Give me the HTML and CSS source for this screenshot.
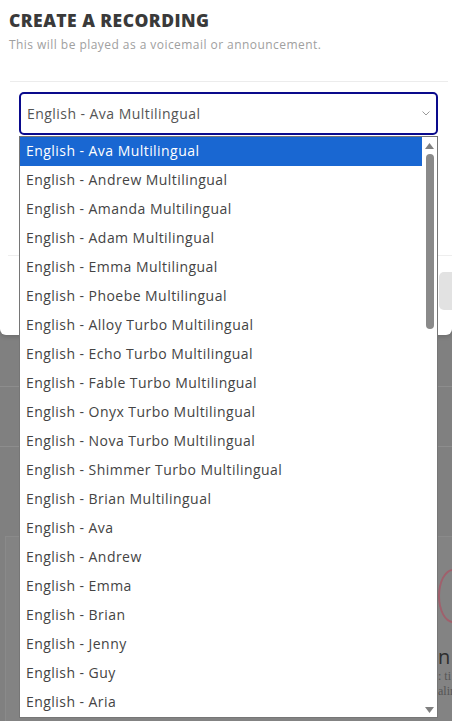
FILE: index.html
```html
<!DOCTYPE html>
<html>
<head>
<meta charset="utf-8">
<link rel="stylesheet" href="styles.css">
</head>
<body>
<div class="page">
  <div class="modal">
    <div class="head">
      <h1 class="title">CREATE A RECORDING</h1>
      <p class="sub">This will be played as a voicemail or announcement.</p>
    </div>
    <div class="rule"></div>
    <div class="body">
      <div class="select">
        <span>English - Ava Multilingual</span>
        <svg class="chev" width="8" height="5" viewBox="0 0 8 5"><path d="M0.5 0.5 L4 4 L7.5 0.5" fill="none" stroke="#9a9a9a" stroke-width="1"/></svg>
      </div>
    </div>
    <div class="foot">
      <div class="btn"></div>
    </div>
  </div>
  <div class="bg">
    <div class="bg-row"></div>
    <div class="bg-row"></div>
    <div class="bg-card">
      <div class="bg-icon"></div>
      <div class="bg-n">n</div>
      <div class="bg-t">: ti</div>
      <div class="bg-t">alir</div>
    </div>
  </div>

  <div class="dropdown">
    <ul class="opts">
      <li class="opt sel">English - Ava Multilingual</li>
      <li class="opt">English - Andrew Multilingual</li>
      <li class="opt">English - Amanda Multilingual</li>
      <li class="opt">English - Adam Multilingual</li>
      <li class="opt">English - Emma Multilingual</li>
      <li class="opt">English - Phoebe Multilingual</li>
      <li class="opt">English - Alloy Turbo Multilingual</li>
      <li class="opt">English - Echo Turbo Multilingual</li>
      <li class="opt">English - Fable Turbo Multilingual</li>
      <li class="opt">English - Onyx Turbo Multilingual</li>
      <li class="opt">English - Nova Turbo Multilingual</li>
      <li class="opt">English - Shimmer Turbo Multilingual</li>
      <li class="opt">English - Brian Multilingual</li>
      <li class="opt">English - Ava</li>
      <li class="opt">English - Andrew</li>
      <li class="opt">English - Emma</li>
      <li class="opt">English - Brian</li>
      <li class="opt">English - Jenny</li>
      <li class="opt">English - Guy</li>
      <li class="opt">English - Aria</li>
    </ul>
    <div class="sbar">
      <svg class="arr" width="9" height="6" viewBox="0 0 9 6"><path d="M0 6 L4.5 0 L9 6 Z" fill="#808080"/></svg>
      <div class="thumb"></div>
      <div class="spacer"></div>
      <svg class="arr" width="9" height="6" viewBox="0 0 9 6"><path d="M0 0 L4.5 6 L9 0 Z" fill="#808080"/></svg>
    </div>
  </div>
</div>
</body>
</html>
```
FILE: styles.css
```css
* { box-sizing: border-box; }
html, body { margin: 0; padding: 0; }
body {
  width: 452px;
  height: 721px;
  overflow: hidden;
  background: #808080;
  font-family: "Open Sans", "Noto Sans", sans-serif;
}
.page {
  position: relative;
  width: 452px;
  height: 721px;
}
.modal {
  background: #fff;
  height: 335px;
  border-radius: 0 0 6px 6px;
  box-shadow: 0 2px 4px rgba(0,0,0,0.15);
  display: flex;
  flex-direction: column;
}
.head {
  padding: 8px 9px 0 9px;
  height: 81px;
}
.title {
  margin: 0;
  font-family: "Open Sans", sans-serif;
  font-weight: 800;
  font-size: 17.5px;
  line-height: 24px;
  color: #3a3a3a;
  letter-spacing: 0.45px;
}
.sub {
  margin: 5px 0 0 0;
  font-size: 12px;
  line-height: 16px;
  color: #a0a0a0;
  letter-spacing: 0.45px;
}
.rule {
  height: 1px;
  background: #ececec;
  margin: 0 4px 0 10px;
}
.body {
  padding: 10px 14px 0 19px;
  height: 173px;
}
.select {
  height: 43px;
  border: 2px solid #0a0a8c;
  border-radius: 5px;
  display: flex;
  align-items: center;
  justify-content: space-between;
  padding: 0 6px 1px 6px;
  font-size: 14px;
  letter-spacing: 0.45px;
  color: #555;
}
.chev { display: block; }
.foot {
  border-top: 1px solid #eeeeee;
  margin-left: 8px;
  padding-top: 16px;
  display: flex;
  justify-content: flex-end;
}
.btn {
  width: 13px;
  height: 38px;
  background: #e2e2e2;
  border-radius: 5px 0 0 5px;
}
.bg {
  display: flex;
  flex-direction: column;
}
.bg-row:first-child { margin-top: 51px; border-top: 1px solid #8d8d8d; height: 60px; }
.bg-row:nth-child(2) { border-top: 1px solid #8d8d8d; height: 90px; }
.bg-card {
  margin-left: 5px;
  border-top: 1px solid #8a8a8a;
  border-left: 1px solid #8a8a8a;
  height: 200px;
  background: #838383;
  display: flex;
  flex-direction: column;
  align-items: flex-end;
  padding-top: 32px;
}
.bg-icon {
  width: 30px;
  height: 54px;
  border: 2px solid #a0606c;
  border-radius: 50%;
  margin-right: -16px;
}
.bg-n {
  font-size: 20px;
  color: #2e2e2e;
  margin-top: 22px;
  line-height: 24px;
  width: 14px;
}
.bg-t {
  font-size: 12px;
  color: #555;
  line-height: 15px;
  width: 14px;
  font-family: "Liberation Serif", serif;
  white-space: nowrap;
  overflow: hidden;
}
.dropdown {
  position: absolute;
  left: 19px;
  top: 136px;
  width: 419px;
  height: 582px;
  background: #fff;
  border: 1px solid #767676;
  display: flex;
}
.opts {
  list-style: none;
  margin: 0;
  padding: 0;
  flex: 1;
}
.opt {
  height: 29px;
  line-height: 27px;
  padding-left: 6px;
  font-size: 14px;
  letter-spacing: 0.45px;
  color: #444;
  white-space: nowrap;
}
.opt.sel {
  background: #1967d2;
  color: #fff;
}
.sbar {
  width: 15px;
  display: flex;
  flex-direction: column;
  align-items: center;
  padding: 6px 0 4px 0;
}
.arr { display: block; flex: none; }
.thumb {
  width: 8px;
  height: 175px;
  margin-top: 5px;
  background: #8a8a8a;
  border-radius: 4px;
}
.spacer { flex: 1; }
```
